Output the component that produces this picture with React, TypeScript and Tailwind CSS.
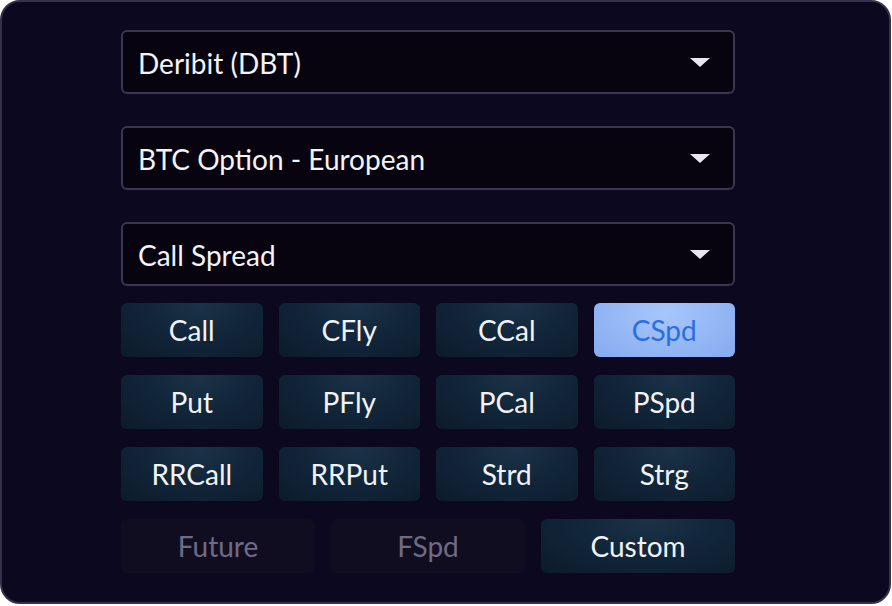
import React from "react";

const Caret = () => (
  <svg width="20" height="9" viewBox="0 0 20 9" className="shrink-0">
    <path d="M0 0 L20 0 L10 9 Z" fill="#e8e6ee" />
  </svg>
);

const Select = ({ label }: { label: string }) => (
  <div className="flex h-[64px] items-center justify-between rounded-[6px] border-2 border-[#3b3650] bg-[#07040f] pl-[15px] pr-[23px]">
    <span className="pt-[1px] text-[28px] leading-none text-[#f4f3f8]">{label}</span>
    <Caret />
  </div>
);

type BtnKind = "normal" | "active" | "disabled";

const Btn = ({ label, kind = "normal" }: { label: string; kind?: BtnKind }) => {
  const cls =
    kind === "active"
      ? "bg-[radial-gradient(ellipse_at_50%_20%,#a7c6fb_0%,#8fb3f3_70%,#86abef_100%)] text-[#2b6ee2]"
      : kind === "disabled"
      ? "bg-[#100d20] text-[#6f6b85]"
      : "bg-[radial-gradient(ellipse_at_55%_0%,#1a3349_0%,#12263a_45%,#0c1b2b_100%)] text-[#f1f3f7]";
  return (
    <div
      className={`flex h-[54px] items-center justify-center rounded-[6px] text-[28px] leading-none ${cls}`}
    >
      {label}
    </div>
  );
};

export default function App() {
  return (
    <div className="h-[606px] w-[892px] bg-white" style={{ fontFamily: "Lato, 'Open Sans', sans-serif" }}>
      <div className="h-[604px] w-[891px] rounded-[20px] border-2 border-[#35314a] bg-[#0c0820] pl-[119px] pt-[28px]">
        <div className="flex w-[614px] flex-col">
          <div className="flex flex-col gap-[32px]">
            <Select label="Deribit (DBT)" />
            <Select label="BTC Option - European" />
            <Select label="Call Spread" />
          </div>
          <div className="mt-[17px] grid grid-cols-4 gap-x-[16px] gap-y-[18px]">
            <Btn label="Call" />
            <Btn label="CFly" />
            <Btn label="CCal" />
            <Btn label="CSpd" kind="active" />
            <Btn label="Put" />
            <Btn label="PFly" />
            <Btn label="PCal" />
            <Btn label="PSpd" />
            <Btn label="RRCall" />
            <Btn label="RRPut" />
            <Btn label="Strd" />
            <Btn label="Strg" />
          </div>
          <div className="mt-[18px] grid grid-cols-3 gap-x-[16px]">
            <Btn label="Future" kind="disabled" />
            <Btn label="FSpd" kind="disabled" />
            <Btn label="Custom" />
          </div>
        </div>
      </div>
    </div>
  );
}
